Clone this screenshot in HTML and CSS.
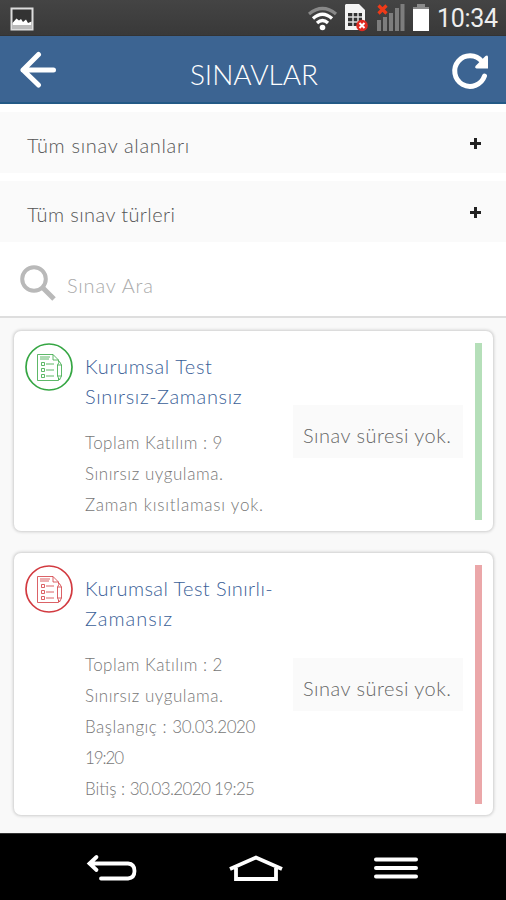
FILE: index.html
```html
<!DOCTYPE html>
<html lang="tr">
<head>
<meta charset="utf-8">
<title>Sınavlar</title>
<link rel="stylesheet" href="styles.css">
</head>
<body>
<div class="status">
  <svg class="picture" width="24" height="24" viewBox="0 0 24 24"><rect x="1.5" y="1.5" width="21" height="21" fill="#333" stroke="#ddd" stroke-width="2"/><path d="M2.500 16 6.500 11.500 9 13.500 11 12 13 15 16 12.500 18 16 21.500 14.500V18H2.500Z" fill="#fff"/><path d="M2 18H22V22H2Z" fill="#bbb"/></svg>
  <svg width="176" height="32" viewBox="0 0 176 32" class="indicators">
    <g fill="none" stroke="#fff" stroke-width="3.300"><path d="M1 12Q14.500 1 28 12" stroke="#888"/><path d="M5 16.500Q14.500 8 24 16.500"/><path d="M9 21Q14.500 16 20 21"/></g><circle cx="14.500" cy="25.500" r="2.800" fill="#fff"/>
    <path d="M38 2H51L57 8V28H37V3Z" fill="#f4f4f4"/><path d="M40 11H54V24H40Z" fill="#333"/><path d="M40 15H54M40 20H54M45 11V24M50 11V24" stroke="#ddd" stroke-width="1.500"/><circle cx="54" cy="23.500" r="5.800" fill="#e02a20"/><path d="M51.500 21 56.500 26M56.500 21 51.500 26" stroke="#fff" stroke-width="2"/>
    <path d="M69 18H73V29H69ZM75 15H79V29H75ZM81 11H85V29H81ZM87 6H91V29H87ZM92.500 2H96.500V29H92.500Z" fill="#7d7d7d"/><path d="M70.500 3.500 78.500 11.500M78.500 3.500 70.500 11.500" stroke="#ee3a18" stroke-width="3.200"/>
    <path d="M109 2H117V5H121V9H105V5H109Z" fill="#8b8b8b"/><path d="M105 7H121V29H105Z" fill="#fff"/>
  </svg>
  <span class="clock">10:34</span>
</div>
<header class="bar">
  <svg width="38" height="38" viewBox="0 0 38 38" fill="none" stroke="#fff" stroke-width="5" stroke-linecap="round" stroke-linejoin="round"><path d="M19.500 3.500 4 19 19.500 34M4 19H34.500"/></svg>
  <h1>SINAVLAR</h1>
  <svg width="40" height="40" viewBox="0 0 40 40"><path d="M33.500 25A15.300 15.300 0 1 1 31 10.500" fill="none" stroke="#fff" stroke-width="5" stroke-linecap="round"/><path d="M37 5.500V17.500H25.500Q23 16.500 25 14.500L34.500 5Q36.500 4 37 5.500Z" fill="#fff"/></svg>
</header>
<section class="filters">
  <div class="filter"><span class="f1">Tüm sınav alanları</span><i class="plus"></i></div>
  <div class="filter"><span class="f2">Tüm sınav türleri</span><i class="plus"></i></div>
  <div class="search">
    <svg width="37" height="37" viewBox="0 0 37 37" fill="none" stroke="#b9b9b9"><circle cx="14" cy="14" r="11.800" stroke-width="4"/><path d="M23 23 34 34" stroke-width="5"/></svg>
    <span>Sınav Ara</span>
  </div>
</section>
<main class="list">
  <article class="card green">
    <svg class="badge" width="48" height="48" viewBox="0 0 48 48" fill="none" stroke="currentColor"><circle cx="24" cy="24" r="23" stroke-width="1.700"/><g stroke-width=".8"><path d="M28 11.500H12.500V37.500H33.500V35M28 11.500 33.500 17V19M28 11.500V17H33.500M15 14H25M15 16H24"/><path d="M16.500 19.500H19.500V22.500H16.500ZM16.500 25.500H19.500V28.500H16.500ZM16.500 31.500H19.500V34.500H16.500ZM21 21H29M21 27H29M21 33H29"/><path d="M34.500 18.500 32.500 22V33L34.500 37 36.500 33V22ZM32.500 22H36.500M32.500 33H36.500"/></g></svg>
    <div class="info">
      <h2><span class="t1">Kurumsal Test</span><br><span class="t2">Sınırsız-Zamansız</span></h2>
      <p><span class="d1">Toplam Katılım : 9</span><br><span class="d2">Sınırsız uygulama.</span><br><span class="d3">Zaman kısıtlaması yok.</span></p>
    </div>
    <div class="chip"><span>Sınav süresi yok.</span></div>
    <div class="stripe"></div>
  </article>
  <article class="card red">
    <svg class="badge" width="48" height="48" viewBox="0 0 48 48" fill="none" stroke="currentColor"><circle cx="24" cy="24" r="23" stroke-width="1.700"/><g stroke-width=".8"><path d="M28 11.500H12.500V37.500H33.500V35M28 11.500 33.500 17V19M28 11.500V17H33.500M15 14H25M15 16H24"/><path d="M16.500 19.500H19.500V22.500H16.500ZM16.500 25.500H19.500V28.500H16.500ZM16.500 31.500H19.500V34.500H16.500ZM21 21H29M21 27H29M21 33H29"/><path d="M34.500 18.500 32.500 22V33L34.500 37 36.500 33V22ZM32.500 22H36.500M32.500 33H36.500"/></g></svg>
    <div class="info">
      <h2><span class="t3">Kurumsal Test Sınırlı-</span><br><span class="t4">Zamansız</span></h2>
      <p><span class="d1">Toplam Katılım : 2</span><br><span class="d2">Sınırsız uygulama.</span><br><span class="d4">Başlangıç : <span class="date">30.03.2020</span></span><br><span class="time">19:20</span><br><span class="d6">Bitiş : <span class="datetime">30.03.2020 19:25</span></span></p>
    </div>
    <div class="chip"><span>Sınav süresi yok.</span></div>
    <div class="stripe"></div>
  </article>
</main>
<nav class="nav">
  <svg width="52" height="28" viewBox="0 0 52 28" fill="none" stroke="#fff" stroke-width="3.800" stroke-linecap="round"><path d="M10.500 4 3.500 10.500 10.500 17M3.500 10.500H42Q48.500 11 48.500 18T42 25.500H15"/></svg>
  <svg width="54" height="28" viewBox="0 0 54 28" fill="none" stroke="#fff" stroke-width="3.800"><path d="M1 16 27 4.500 53 16M7 15V26H47V15"/></svg>
  <svg width="46" height="28" viewBox="0 0 46 28" stroke="#fff" stroke-width="4" stroke-linecap="round"><path d="M3 6.500H43M3 15H43M3 23.500H43"/></svg>
</nav>
</body>
</html>
```
FILE: styles.css
```css
* { box-sizing: border-box; }
body { margin: 0; height: 900px; display: flex; flex-direction: column; background: #fff; font-family: Lato, sans-serif; font-weight: 300; overflow: hidden; }
h1, h2, p { margin: 0; font-weight: 300; }
svg { display: block; flex: none; }
span { white-space: nowrap; }
.status { height: 36px; flex: none; display: flex; align-items: flex-start; background: linear-gradient(#444, #393939); border-bottom: 1px solid #333; }
.picture { margin: 7px 0 0 10px; }
.indicators { margin: 2px 0 0 274px; }
.clock { margin-left: -47px; line-height: 38px; font-family: Roboto, sans-serif; font-weight: 400; font-size: 25px; color: #eee; letter-spacing: -0.3px; }
.bar { height: 68px; flex: none; display: flex; justify-content: space-between; align-items: flex-start; padding: 15px 15px 0 19px; background: #3c6492; border-bottom: 2px solid #245a86; color: #fff; }
.bar h1 { font-size: 28px; line-height: 46px; font-weight: 300; }
.filters { height: 214px; flex: none; padding-top: 8px; border-bottom: 2px solid #dedede; }
.filter { height: 61px; margin-bottom: 8px; padding: 0 25px 0 27px; display: flex; justify-content: space-between; background: #fafafa; font-size: 20px; line-height: 66px; color: #555; }
.plus { width: 11px; height: 11px; margin-top: 26px; background: linear-gradient(#222, #222) 50% / 11px 3px no-repeat, linear-gradient(#222, #222) 50% / 3px 11px no-repeat; }
.search { display: flex; gap: 10px; padding: 15px 0 0 20px; font-size: 20px; line-height: 41px; color: #aaa; letter-spacing: 0.8px; }
.list { flex: 1; background: #f9f9f9; padding: 13px 13px 0 14px; display: flex; flex-direction: column; gap: 22px; }
.card { height: 200px; padding: 12px 11px 11px 11px; display: flex; background: #fff; border-radius: 7px; box-shadow: 0 0 3px 1px #ccc; }
.red { height: 262px; }
.badge { color: #35a643; }
.red .badge { color: #d23a40; }
.info { margin-left: 12px; padding-top: 8px; width: 208px; flex: none; }
.info h2 { font-size: 20px; line-height: 30px; color: #3b5f98; }
.info p { margin-top: 16px; font-size: 17px; line-height: 31px; color: #777; }
.chip { align-self: center; width: 170px; height: 53px; background: #fafafa; font-size: 20px; line-height: 61px; padding-left: 10px; color: #666; letter-spacing: 0.5px; }
.stripe { margin-left: auto; width: 7px; background: #b5dfb9; }
.red .stripe { background: #eba7a9; }
.f1 { letter-spacing: 0.68px; }
.f2 { letter-spacing: 0.4px; }
.t1 { letter-spacing: 0.6px; }
.t2 { letter-spacing: 0.65px; }
.t3 { letter-spacing: 0.42px; }
.t4 { letter-spacing: 1px; }
.d1 { letter-spacing: 0.45px; }
.d2 { letter-spacing: 0.55px; }
.d3 { letter-spacing: 0.77px; }
.d4 { letter-spacing: 0.5px; }
.date { letter-spacing: -0.4px; }
.time { letter-spacing: -1.1px; }
.datetime { letter-spacing: -0.65px; }
.nav { height: 67px; flex: none; background: #000; border-top: 1px solid #333; display: flex; justify-content: space-between; padding: 19px 87px 0 86px; }
```
